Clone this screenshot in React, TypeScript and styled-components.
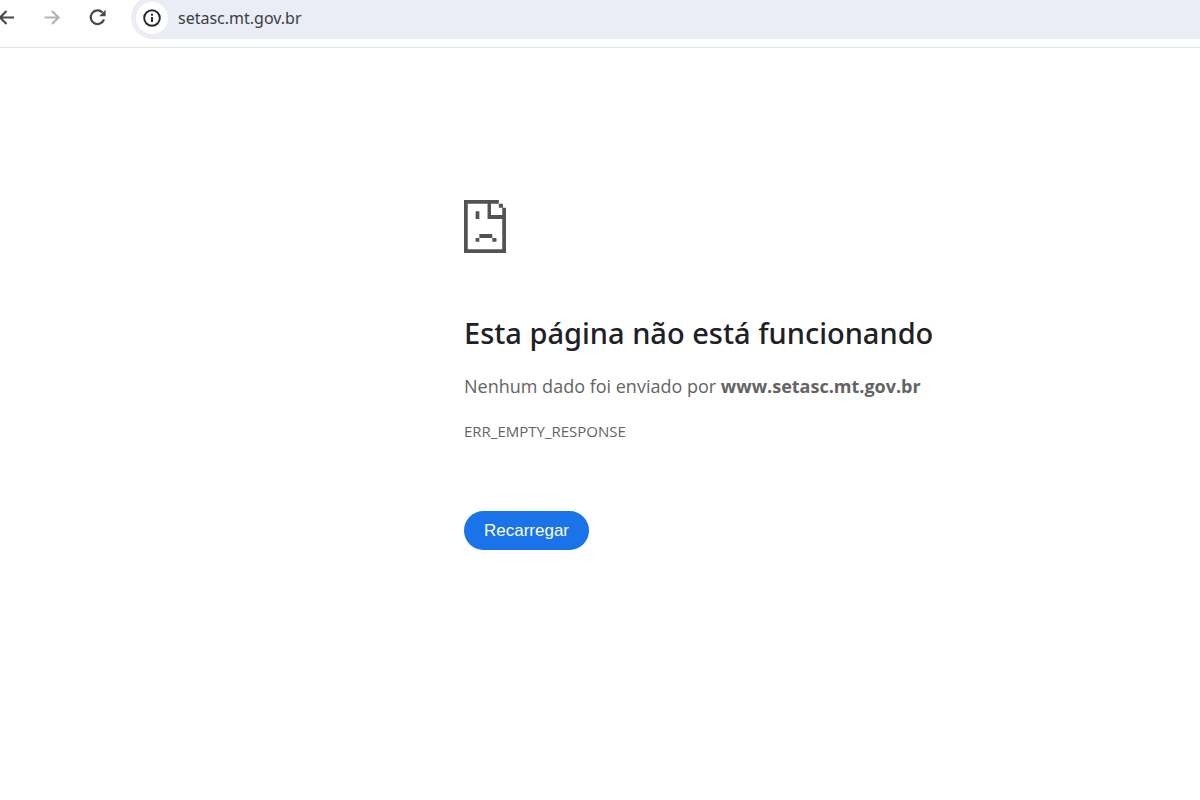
import React from 'react';
import styled, { createGlobalStyle } from 'styled-components';

const GlobalStyle = createGlobalStyle`
  *, *::before, *::after { box-sizing: border-box; }
  body {
    margin: 0;
    background: #fff;
    color: #646464;
    font-family: "Open Sans", "Segoe UI", sans-serif;
  }
`;

const Toolbar = styled.header`
  display: flex;
  align-items: flex-start;
  height: 48px;
  overflow: hidden;
  border-bottom: 1px solid #e4e5e8;
`;

const Navigation = styled.nav`
  display: flex;
  flex: none;
  gap: 22px;
  margin-left: -5px;
  padding: 6px 20px 0 0;
`;

const NavButton = styled.button`
  display: flex;
  width: 24px;
  height: 24px;
  padding: 0;
  border: 0;
  background: none;
  color: #47484b;

  &:disabled { color: #b3b4b6; }
`;

const AddressBar = styled.div`
  display: flex;
  flex: 1;
  align-items: center;
  gap: 10px;
  height: 43px;
  margin-top: -4px;
  padding-left: 5px;
  border-radius: 22px 0 0 22px;
  background: #eaedf6;
`;

const SiteInfo = styled.button`
  display: flex;
  flex: none;
  align-items: center;
  justify-content: center;
  width: 32px;
  height: 32px;
  padding: 0;
  border: 0;
  border-radius: 50%;
  background: #fff;
  color: #2b2c2f;
`;

const AddressInput = styled.input`
  flex: 1;
  min-width: 0;
  padding: 0;
  border: 0;
  outline: 0;
  background: transparent;
  color: #3c3d42;
  font: 400 16px/24px "Noto Sans", "Segoe UI", sans-serif;
`;

const Page = styled.main`
  display: grid;
  grid-template-columns: 464fr 736fr;
  padding: 152px 0 48px;
`;

const Message = styled.section`
  grid-column: 2;
  padding-right: 24px;
`;

const SadPage = styled.svg`
  display: block;
  width: 42px;
  height: 53px;
  fill: #535353;
`;

const Title = styled.h1`
  margin: 60px 0 0;
  color: #202124;
  font-family: "Noto Sans", "Segoe UI", sans-serif;
  font-size: 29px;
  font-weight: 500;
  line-height: 40px;
`;

const Summary = styled.p`
  margin: 19px 0 0;
  font-size: 18px;
  line-height: 28px;
`;

const ErrorCode = styled.p`
  margin: 19px 0 0;
  font-size: 15px;
  line-height: 24px;
`;

const ReloadButton = styled.button`
  height: 39px;
  margin-top: 68px;
  padding: 0 20px;
  border: 0;
  border-radius: 20px;
  background: #1a73e8;
  color: #fff;
  font: 400 17px/24px "Liberation Sans", Arial, sans-serif;
`;

export default function App() {
  return (
    <>
      <GlobalStyle />
      <Toolbar>
        <Navigation aria-label="Navegação">
          <NavButton type="button" aria-label="Voltar">
            <svg width="24" height="24" viewBox="0 0 24 24" fill="none" stroke="currentColor" strokeWidth="2.2">
              <path d="M19 11.5H5M11.5 5L5 11.5L11.5 18" />
            </svg>
          </NavButton>
          <NavButton type="button" aria-label="Avançar" disabled>
            <svg width="24" height="24" viewBox="0 0 24 24" fill="none" stroke="currentColor" strokeWidth="2.2">
              <path d="M3.500 11.500H17.500M11 5L17.500 11.500L11 18" />
            </svg>
          </NavButton>
          <NavButton type="button" aria-label="Recarregar página">
            <svg width="24" height="24" viewBox="0 0 24 24" fill="none" stroke="currentColor" strokeWidth="2.2">
              <path d="M15.500 6.600A6.800 6.800 0 1 0 17 13.400" />
              <path d="M18.600 3.800V10.200H12.200Z" fill="currentColor" stroke="none" />
            </svg>
          </NavButton>
        </Navigation>
        <AddressBar>
          <SiteInfo type="button" aria-label="Informações do site">
            <svg width="20" height="20" viewBox="0 0 20 20" fill="none" stroke="currentColor" strokeWidth="2">
              <circle cx="10" cy="10" r="7.800" />
              <path d="M10 9V14M10 5.800V7.800" />
            </svg>
          </SiteInfo>
          <AddressInput aria-label="Endereço" defaultValue="setasc.mt.gov.br" spellCheck={false} />
        </AddressBar>
      </Toolbar>
      <Page>
        <Message>
          <SadPage viewBox="0 0 123 159" aria-hidden="true" preserveAspectRatio="none">
            <path d="M0 0H102V11H79V45H123V159H0ZM11 11V148H112V57H69V11Z" fillRule="evenodd" />
            <path d="M102 11H114V23H102ZM112 23H123V46H112ZM34 34H45V57H34ZM45 102H83V114H45ZM34 114H45V125H34ZM83 114H95V125H83Z" />
          </SadPage>
          <Title>Esta página não está funcionando</Title>
          <Summary>
            Nenhum dado foi enviado por <strong>www.setasc.mt.gov.br</strong>
          </Summary>
          <ErrorCode>ERR_EMPTY_RESPONSE</ErrorCode>
          <ReloadButton type="button">Recarregar</ReloadButton>
        </Message>
      </Page>
    </>
  );
}
